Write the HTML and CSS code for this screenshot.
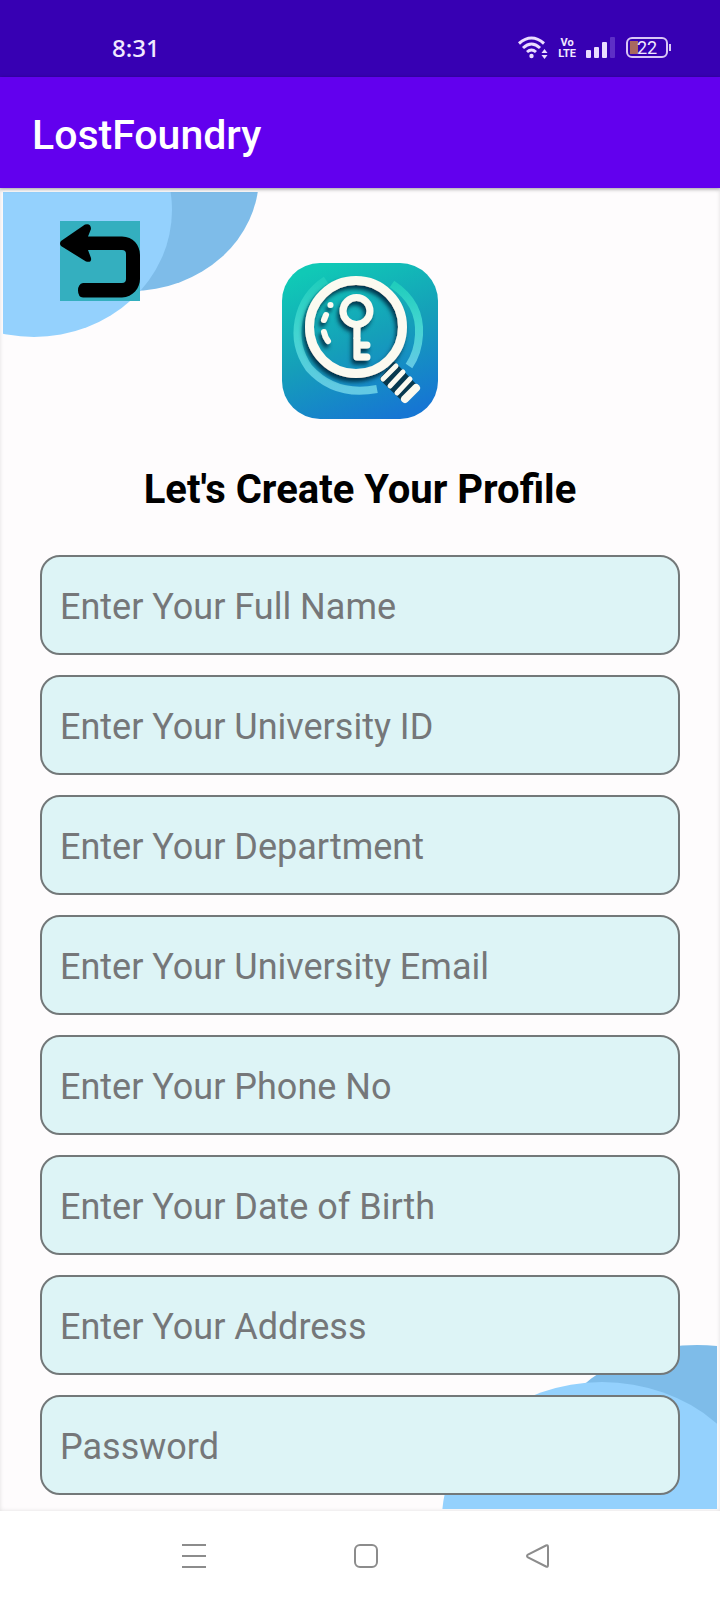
FILE: index.html
```html
<!DOCTYPE html>
<html lang="en">
<head>
<meta charset="utf-8">
<meta name="viewport" content="width=device-width, initial-scale=1">
<title>LostFoundry</title>
<link rel="stylesheet" href="styles.css">
</head>
<body>
<div class="screen">
  <div class="status">
    <span class="clock">8:31</span>
    <div class="indicators">
      <svg class="wifi" width="30" height="24" viewBox="0 0 30 24" fill="none" stroke="#eadcff" stroke-width="3">
        <path d="M1 7.500Q13.500-3.500 26 7.500M5 12Q13.500 4 22 12M9 16Q13.500 12 18 16"/>
        <circle cx="13.500" cy="20" r="2.200" fill="#eadcff" stroke="none"/>
        <path d="M26.500 13l3 4h-6zM26.500 23l3-4h-6z" fill="#eadcff" stroke="none"/>
      </svg>
      <span class="volte"><span>Vo</span><span>LTE</span></span>
      <svg width="30" height="21" viewBox="0 0 30 21" fill="#eadcff">
        <rect y="13" width="5" height="8" rx="1"/><rect x="8" y="10" width="5" height="11" rx="1"/><rect x="16" y="5" width="5" height="16" rx="1"/><rect x="24" width="5" height="21" rx="1" fill="#5d2fc6"/>
      </svg>
      <span class="battery">22</span>
    </div>
  </div>
  <header class="appbar"><h1>LostFoundry</h1></header>
  <main class="content">
    <svg class="decor decor-top" width="256" height="148" viewBox="3 192 256 148">
      <ellipse cx="131" cy="176" rx="128" ry="115" fill="#7ebce9"/>
      <ellipse cx="34" cy="210" rx="138" ry="127" fill="#94d1fd"/>
    </svg>
    <svg class="decor decor-bottom" width="275" height="164" viewBox="442 1346 275 164">
      <ellipse cx="697" cy="1461" rx="150" ry="115" fill="#7ebce9"/>
      <ellipse cx="602" cy="1520" rx="160" ry="137" fill="#94d1fd"/>
    </svg>
    <button class="back" type="button" aria-label="Back">
      <svg width="80" height="80" viewBox="0 0 80 80">
        <path d="M25 3.500L1 20Q-1 22.500 1 25L26 40.500Q32 42 31 37L28 29H62Q66 29 66 33V58Q66 62 62 62H23Q18 63 18 69.500Q18 76 23 76.500H62C73 76 80 67 80 58V34C80 24 73 15.500 62 15.500H28L31 8Q31 2 25 3.500Z"/>
      </svg>
    </button>
    <svg class="logo" width="156" height="156" viewBox="0 0 156 156" role="img" aria-label="LostFoundry logo">
      <defs>
        <linearGradient id="tile" x1=".3" y1="0" x2=".7" y2="1"><stop offset="0" stop-color="#10c9b6"/><stop offset=".5" stop-color="#159fb9"/><stop offset="1" stop-color="#1676d3"/></linearGradient>
        <linearGradient id="ring" x1="0" y1="0" x2="0" y2="1"><stop offset="0" stop-color="#20cdbc"/><stop offset=".5" stop-color="#43d5d1"/><stop offset="1" stop-color="#63c9e4"/></linearGradient>
        <filter id="shade" x="-20%" y="-20%" width="150%" height="150%"><feDropShadow dx="-2" dy="4" stdDeviation="2" flood-color="#06354d" flood-opacity="1"/></filter>
      </defs>
      <rect width="156" height="156" rx="38" fill="url(#tile)"/>
      <g fill="none" stroke="url(#ring)" stroke-width="8">
        <path d="M44 17A62 62 0 0 0 27 105Q53 134 95 126"/>
        <path d="M110 21Q139 40 137 72Q136 90 127 103"/>
      </g>
      <g filter="url(#shade)" fill="none" stroke="#fbfaf0">
        <circle cx="74" cy="64" r="46.500" stroke-width="9"/>
        <circle cx="74.500" cy="48" r="13.500" stroke-width="7"/>
        <path d="M75 62V76" stroke-width="7"/>
        <path d="M75 76V94M76 82H85M76 94H85" stroke-width="7" stroke-linecap="round"/>
        <path d="M44 52L42 57M42 69Q43 74 46 78" stroke-width="6" stroke-linecap="round"/>
        <circle cx="48.500" cy="42" r="3" fill="#fbfaf0" stroke="none"/>
      </g>
      <path d="M112 101L133 123L122 137L100 116Z" fill="#07394f" stroke="#07394f" stroke-width="4" stroke-linejoin="round"/>
      <g fill="none" stroke="#fbfaf0" stroke-linecap="round">
        <path d="M114 103L101 116M121 109L108 123M128 116L115 130" stroke-width="5"/>
        <path d="M134 125L123 136" stroke-width="8"/>
      </g>
    </svg>
    <h2 class="heading">Let's Create Your Profile</h2>
    <form class="form">
      <input type="text" aria-label="Full name" placeholder="Enter Your Full Name">
      <input type="text" aria-label="University ID" placeholder="Enter Your University ID">
      <input type="text" aria-label="Department" placeholder="Enter Your Department">
      <input type="email" aria-label="University email" placeholder="Enter Your University Email">
      <input type="tel" aria-label="Phone number" placeholder="Enter Your Phone No">
      <input type="text" aria-label="Date of birth" placeholder="Enter Your Date of Birth">
      <input type="text" aria-label="Address" placeholder="Enter Your Address">
      <input type="password" aria-label="Password" placeholder="Password">
    </form>
  </main>
  <nav class="navbar" aria-label="System">
    <button type="button" aria-label="Recent apps"><svg width="24" height="24" viewBox="0 0 24 24"><path d="M0 1h24M0 12h24M0 23h24"/></svg></button>
    <button type="button" aria-label="Home"><svg width="24" height="24" viewBox="0 0 24 24"><rect x="1" y="1" width="22" height="22" rx="5"/></svg></button>
    <button type="button" aria-label="Go back"><svg width="24" height="24" viewBox="0 0 24 24"><path d="M20 1.500L2 10.500Q0 12 2 13.500L20 22.500Q22 23.500 22 21V3Q22 .5 20 1.500Z"/></svg></button>
  </nav>
</div>
</body>
</html>
```
FILE: styles.css
```css
* {
  box-sizing: border-box;
}

body {
  margin: 0;
  background: #fff;
  font-family: Roboto, "Liberation Sans", sans-serif;
}

button {
  padding: 0;
  border: 0;
  background: none;
}

svg {
  display: block;
}

.screen {
  display: flex;
  flex-direction: column;
  min-height: 100vh;
}

.status {
  display: flex;
  align-items: center;
  justify-content: space-between;
  height: 77px;
  padding: 18px 49px 0 112px;
  background: #3700b3;
  color: #f1e8ff;
}

.clock {
  font-family: "Noto Sans", sans-serif;
  font-size: 24px;
  font-weight: 500;
}

.indicators {
  display: flex;
  align-items: center;
  gap: 10px;
}

.volte {
  display: flex;
  flex-direction: column;
  align-items: center;
  font-size: 11px;
  font-weight: 700;
  line-height: 11px;
}

.battery {
  position: relative;
  width: 42px;
  height: 21px;
  margin-right: 3px;
  border: 2px solid #d9c6f5;
  border-radius: 6px;
  background: linear-gradient(#a8695f, #a8695f) 2px 2px / 8px 13px no-repeat;
  font-size: 18px;
  line-height: 18px;
  text-align: center;
}

.battery::after {
  content: "";
  position: absolute;
  top: 5px;
  right: -5px;
  width: 2px;
  height: 7px;
  background: #d9c6f5;
}

.appbar {
  position: relative;
  z-index: 1;
  display: flex;
  align-items: center;
  height: 111px;
  padding: 5px 32px 0;
  background: #6200ee;
  box-shadow: 0 1px 4px rgba(0, 0, 0, .35);
}

.appbar h1 {
  margin: 0;
  color: #fff;
  font-size: 41px;
  font-weight: 500;
  line-height: 48px;
}

.content {
  position: relative;
  display: flex;
  flex: 1;
  flex-direction: column;
  padding: 33px 40px 16px;
  background: #fefcfd;
  box-shadow: inset 0 0 4px rgba(0, 0, 0, .12);
}

.decor {
  position: absolute;
}

.decor-top {
  top: 4px;
  left: 3px;
}

.decor-bottom {
  right: 3px;
  bottom: 2px;
}

.back {
  position: relative;
  align-self: flex-start;
  width: 80px;
  height: 80px;
  margin-left: 20px;
  background: #34afbf;
}

.logo {
  align-self: center;
  margin-top: -38px;
}

.heading {
  margin: 47px 0 41px;
  color: #000;
  font-size: 40px;
  font-weight: 700;
  line-height: 48px;
  text-align: center;
}

.form {
  position: relative;
  display: flex;
  flex-direction: column;
  gap: 20px;
}

.form input {
  width: 100%;
  height: 100px;
  padding: 4px 18px 0;
  border: 2px solid #737879;
  border-radius: 20px;
  background: #ddf4f6;
  color: #222;
  font-family: inherit;
  font-size: 36px;
}

.form input::placeholder {
  color: #757779;
  opacity: 1;
}

.navbar {
  display: flex;
  justify-content: center;
  height: 89px;
  padding-left: 12px;
  background: #fff;
}

.navbar button {
  display: flex;
  align-items: center;
  justify-content: center;
  width: 172px;
}

.navbar svg {
  fill: none;
  stroke: #8c8c8c;
  stroke-width: 2;
}
```
